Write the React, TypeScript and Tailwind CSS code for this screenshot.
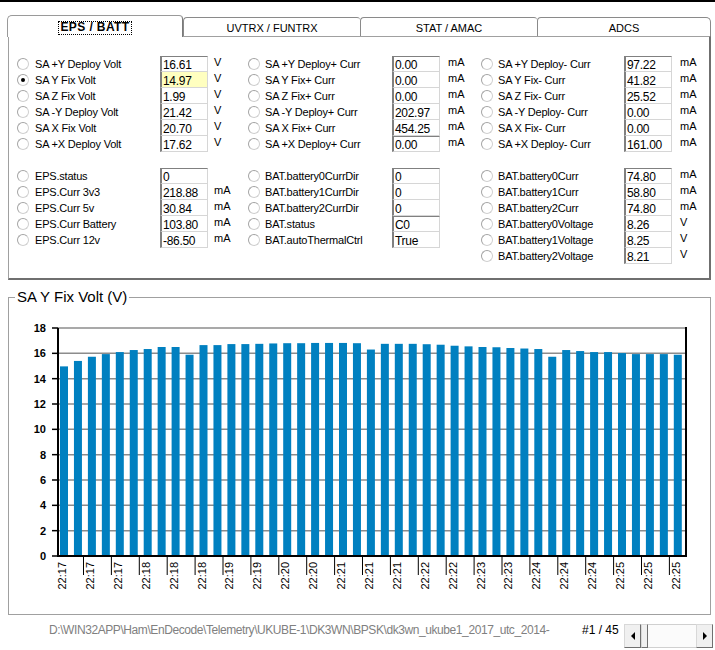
import React from "react";

type RowData = {
  label: string;
  value: string;
  unit?: string;
  checked?: boolean;
  yellow?: boolean;
  darkTop?: boolean;
};

type ColCfg = {
  width: string;
  labelMl: string;
  labelW: string;
  unitMl: string;
};

const cfgs: ColCfg[] = [
  { width: "w-[231px]", labelMl: "ml-[6px]", labelW: "w-[125px]", unitMl: "ml-[6px]" },
  { width: "w-[233px]", labelMl: "ml-[5px]", labelW: "w-[127px]", unitMl: "ml-[8px]" },
  { width: "w-[220px]", labelMl: "ml-[5px]", labelW: "w-[126px]", unitMl: "ml-[8px]" },
];

const sec1: RowData[][] = [
  [
    { label: "SA +Y Deploy Volt", value: "16.61", unit: "V", darkTop: true },
    { label: "SA Y Fix Volt", value: "14.97", unit: "V", checked: true, yellow: true },
    { label: "SA Z Fix Volt", value: "1.99", unit: "V" },
    { label: "SA -Y Deploy Volt", value: "21.42", unit: "V" },
    { label: "SA X Fix Volt", value: "20.70", unit: "V" },
    { label: "SA +X Deploy Volt", value: "17.62", unit: "V" },
  ],
  [
    { label: "SA +Y Deploy+ Curr", value: "0.00", unit: "mA", darkTop: true },
    { label: "SA Y Fix+ Curr", value: "0.00", unit: "mA" },
    { label: "SA Z Fix+ Curr", value: "0.00", unit: "mA" },
    { label: "SA -Y Deploy+ Curr", value: "202.97", unit: "mA" },
    { label: "SA X Fix+ Curr", value: "454.25", unit: "mA" },
    { label: "SA +X Deploy+ Curr", value: "0.00", unit: "mA", darkTop: true },
  ],
  [
    { label: "SA +Y Deploy- Curr", value: "97.22", unit: "mA", darkTop: true },
    { label: "SA Y Fix- Curr", value: "41.82", unit: "mA" },
    { label: "SA Z Fix- Curr", value: "25.52", unit: "mA" },
    { label: "SA -Y Deploy- Curr", value: "0.00", unit: "mA" },
    { label: "SA X Fix- Curr", value: "0.00", unit: "mA" },
    { label: "SA +X Deploy- Curr", value: "161.00", unit: "mA" },
  ],
];

const sec2: RowData[][] = [
  [
    { label: "EPS.status", value: "0", darkTop: true },
    { label: "EPS.Curr 3v3", value: "218.88", unit: "mA" },
    { label: "EPS.Curr 5v", value: "30.84", unit: "mA" },
    { label: "EPS.Curr Battery", value: "103.80", unit: "mA" },
    { label: "EPS.Curr 12v", value: "-86.50", unit: "mA" },
  ],
  [
    { label: "BAT.battery0CurrDir", value: "0", darkTop: true },
    { label: "BAT.battery1CurrDir", value: "0" },
    { label: "BAT.battery2CurrDir", value: "0" },
    { label: "BAT.status", value: "C0", darkTop: true },
    { label: "BAT.autoThermalCtrl", value: "True" },
  ],
  [
    { label: "BAT.battery0Curr", value: "74.80", unit: "mA", darkTop: true },
    { label: "BAT.battery1Curr", value: "58.80", unit: "mA" },
    { label: "BAT.battery2Curr", value: "74.80", unit: "mA" },
    { label: "BAT.battery0Voltage", value: "8.26", unit: "V" },
    { label: "BAT.battery1Voltage", value: "8.25", unit: "V" },
    { label: "BAT.battery2Voltage", value: "8.21", unit: "V" },
  ],
];

const values = [
  14.97, 15.4, 15.73, 15.94, 16.1, 16.26, 16.34, 16.5, 16.5, 15.89, 16.65, 16.65, 16.73, 16.73,
  16.75, 16.78, 16.8, 16.8, 16.82, 16.82, 16.82, 16.8, 16.3, 16.75, 16.75, 16.75, 16.72, 16.68,
  16.6, 16.55, 16.5, 16.48, 16.42, 16.38, 16.34, 15.73, 16.26, 16.18, 16.1, 16.1, 16.02, 15.94,
  15.94, 15.94, 15.89,
];

const xLabels = [
  "22:17", "22:17", "22:17", "22:18", "22:18", "22:18", "22:19", "22:19", "22:20", "22:20",
  "22:21", "22:21", "22:21", "22:22", "22:22", "22:23", "22:23", "22:24", "22:24", "22:24",
  "22:25", "22:25", "22:25",
];

function Radio({ checked }: { checked?: boolean }) {
  return (
    <span className="w-[12px] h-[12px] rounded-full border border-[#a4a4a4] border-b-[#d0d0d0] border-r-[#d0d0d0] bg-white flex items-center justify-center shrink-0">
      {checked && <span className="w-[4px] h-[4px] rounded-full bg-black" />}
    </span>
  );
}

function Row({ r, cfg }: { r: RowData; cfg: ColCfg }) {
  return (
    <div className="flex h-[16px]">
      <div className="flex items-center h-[16px]">
        <Radio checked={r.checked} />
      </div>
      <div
        className={`${cfg.labelMl} ${cfg.labelW} text-[11px] leading-[16px] whitespace-nowrap tracking-[-0.2px] shrink-0`}
      >
        {r.label}
      </div>
      <div
        className={`w-[48px] h-[16px] shrink-0 border-l-2 border-l-[#808080] border-r border-r-[#d6d6d6] border-b border-b-[#d6d6d6] pl-[1px] text-[12px] leading-[14px] tracking-[-0.3px] whitespace-nowrap overflow-hidden ${
          r.darkTop ? "border-t border-t-[#808080] pt-[1px]" : "pt-[2px]"
        } ${r.yellow ? "bg-[#ffffc0]" : "bg-white"}`}
      >
        {r.value}
      </div>
      {r.unit && <div className={`${cfg.unitMl} text-[11px] leading-[12px]`}>{r.unit}</div>}
    </div>
  );
}

function Section({ data }: { data: RowData[][] }) {
  return (
    <div className="flex">
      {data.map((col, ci) => (
        <div key={ci} className={`${cfgs[ci].width} flex flex-col shrink-0`}>
          {col.map((r, ri) => (
            <Row key={ri} r={r} cfg={cfgs[ci]} />
          ))}
        </div>
      ))}
    </div>
  );
}

function Chart() {
  const X0 = 57;
  const CW = 13.95;
  const Y0 = 556;
  const SC = 228 / 18;
  const grid = [2, 4, 6, 8, 10, 12, 14, 16, 18];
  const yl = [0, 2, 4, 6, 8, 10, 12, 14, 16, 18];
  return (
    <svg width={701} height={316} viewBox="9 298 701 316" className="block">
      {grid.map((g) => (
        <line key={g} x1={58} x2={686} y1={Y0 - g * SC} y2={Y0 - g * SC} stroke="#8c8c8c" strokeWidth={1.5} />
      ))}
      {values.map((v, i) => (
        <rect key={i} x={X0 + i * CW + 3} y={Y0 - v * SC} width={8} height={v * SC} fill="#0080c0" />
      ))}
      {yl.map((g) => (
        <g key={g}>
          <line x1={52} x2={58} y1={Y0 - g * SC} y2={Y0 - g * SC} stroke="#000" strokeWidth={1.5} />
          <text
            x={46}
            y={Y0 - g * SC}
            dy="0.36em"
            textAnchor="end"
            fontSize={11}
            fontWeight={700}
            fontFamily="'Liberation Sans', Arial, sans-serif"
            fill="#000"
          >
            {g}
          </text>
        </g>
      ))}
      <line x1={58} x2={58} y1={328} y2={557} stroke="#000" strokeWidth={2} />
      <line x1={686} x2={686} y1={327} y2={557} stroke="#000" strokeWidth={2} />
      <line x1={57} x2={687} y1={556} y2={556} stroke="#000" strokeWidth={2} />
      {Array.from({ length: 22 }).map((_, k) => (
        <line key={k} x1={83.5 + 27.9 * k} x2={83.5 + 27.9 * k} y1={556} y2={575} stroke="#000" strokeWidth={1} />
      ))}
      {xLabels.map((t, k) => (
        <text
          key={k}
          transform={`translate(${66 + 27.9 * k}, 562) rotate(-90)`}
          textAnchor="end"
          fontSize={11}
          fontFamily="'Liberation Sans', Arial, sans-serif"
          fill="#000"
        >
          {t}
        </text>
      ))}
    </svg>
  );
}

export default function App() {
  return (
    <div className="w-[715px] h-[650px] overflow-hidden bg-white text-black font-['Liberation_Sans',Arial,sans-serif]">
      <div className="h-[2px] bg-black" />
      {/* Tabs */}
      <div className="flex items-end pl-[7px] mt-[13px] h-[21px]">
        <div className="relative z-10 -mb-px w-[176px] h-[22px] shrink-0 bg-white border-l border-t border-r border-[#9a9a9a] border-r-[#7a7a7a] rounded-tl-[5px] rounded-tr-[4px] flex justify-center pt-[6px]">
          <span className="block h-[12px] px-[1px] text-[12px] leading-[10px] font-bold tracking-[0.4px] outline outline-1 outline-dotted outline-black">
            EPS / BATT
          </span>
        </div>
        <div className="w-[177px] h-[19px] shrink-0 border-l border-t border-[#8a8a8a] rounded-tl-[4px] rounded-tr-[3px] flex items-center justify-center text-[11px] leading-[12px] pt-[1px]">
          UVTRX / FUNTRX
        </div>
        <div className="w-[177px] h-[19px] shrink-0 border-l border-t border-[#8a8a8a] rounded-tl-[4px] rounded-tr-[3px] flex items-center justify-center text-[11px] leading-[12px] pt-[1px]">
          STAT / AMAC
        </div>
        <div className="w-[174px] h-[19px] shrink-0 border-l border-t border-r border-[#8a8a8a] rounded-tl-[4px] rounded-tr-[5px] flex items-center justify-center text-[11px] leading-[12px] pt-[1px]">
          ADCS
        </div>
      </div>
      {/* Panel */}
      <div className="ml-[8px] w-[703px] h-[244px] border-l border-t border-[#a0a0a0] border-r-2 border-b-2 border-r-[#6f6f6f] border-b-[#6f6f6f] pt-[19px] pl-[8px]">
        <Section data={sec1} />
        <div className="mt-[16px]">
          <Section data={sec2} />
        </div>
      </div>
      {/* Chart group */}
      <div className="relative mt-[17px] ml-[8px] w-[703px] h-[318px] border border-[#a0a0a0]">
        <Chart />
        <span className="absolute -top-[10px] left-[6px] bg-white px-[2px] text-[15px] leading-[17px] whitespace-nowrap">
          SA Y Fix Volt (V)
        </span>
      </div>
      {/* Bottom bar */}
      <div className="flex h-[35px]">
        <div className="ml-[49px] w-[533px] shrink-0 mt-[8px] text-[12px] leading-[14px] tracking-[-0.42px] text-[#808080] whitespace-nowrap overflow-hidden">
          {"D:\\WIN32APP\\Ham\\EnDecode\\Telemetry\\UKUBE-1\\DK3WN\\BPSK\\dk3wn_ukube1_2017_utc_2014-"}
        </div>
        <div className="w-[42px] shrink-0 mt-[8px] text-[12px] leading-[14px] whitespace-nowrap">#1 / 45</div>
        <div className="mt-[9px] flex h-[24px] w-[89px] shrink-0">
          <div className="w-[17px] h-full bg-[#f0f0f0] border border-[#d8d8d8] border-r-[#707070] border-b-[#707070] flex items-center justify-center">
            <span className="w-0 h-0 border-y-[4px] border-y-transparent border-r-[4px] border-r-black" />
          </div>
          <div className="w-[7px] h-full bg-[#f0f0f0] border border-[#d8d8d8] border-r-[#707070] border-b-[#707070]" />
          <div className="w-[48px] h-full bg-[#fbfbfb] border-y border-[#d0d0d0]" />
          <div className="w-[17px] h-full bg-[#f0f0f0] border border-[#d8d8d8] border-r-[#707070] border-b-[#707070] flex items-center justify-center">
            <span className="w-0 h-0 border-y-[4px] border-y-transparent border-l-[4px] border-l-black" />
          </div>
        </div>
      </div>
    </div>
  );
}
